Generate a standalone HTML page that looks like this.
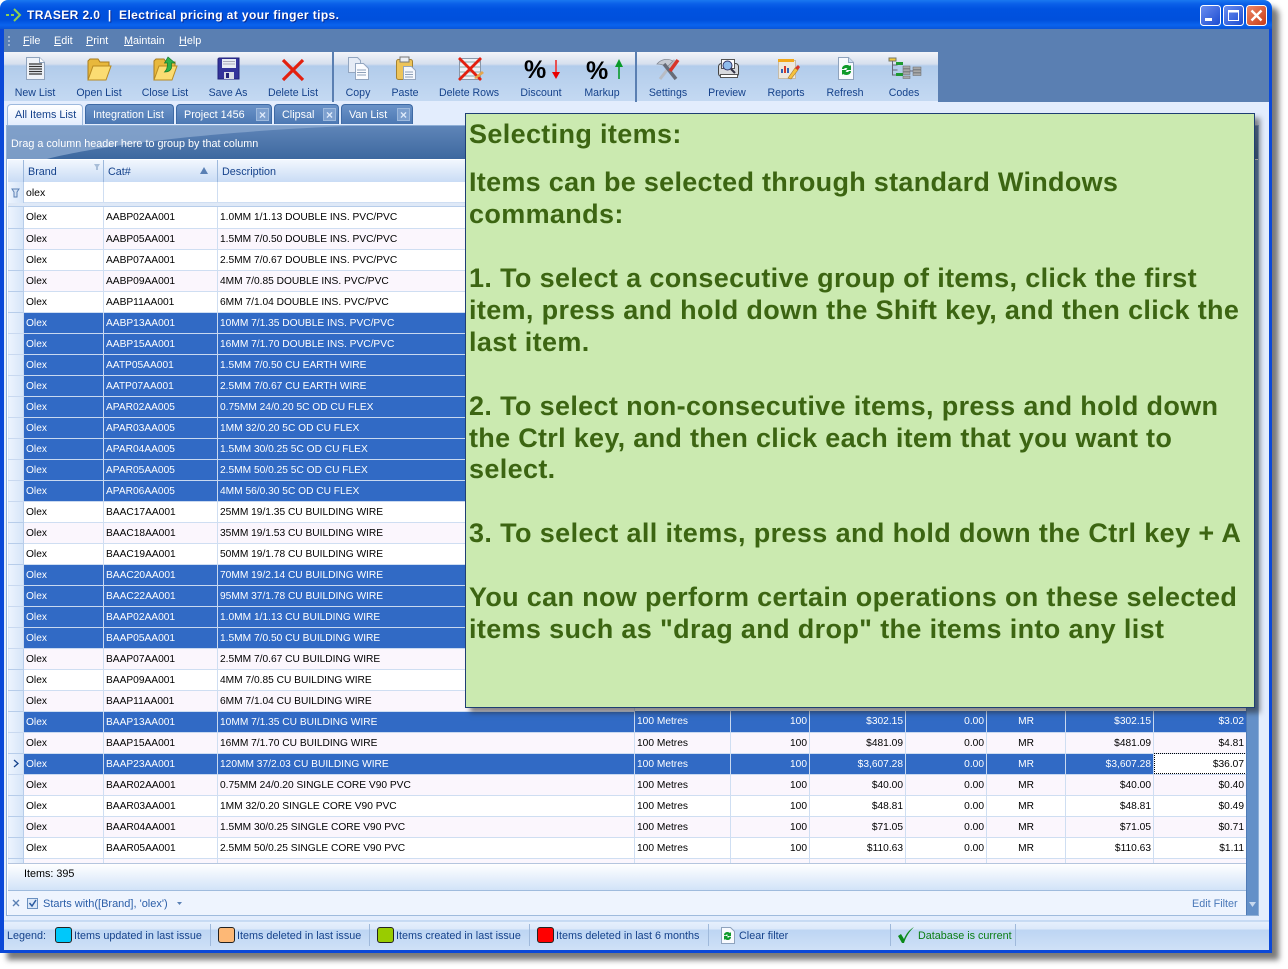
<!DOCTYPE html>
<html><head><meta charset="utf-8"><style>
*{box-sizing:border-box}
html,body{margin:0;padding:0;background:#fff;width:1288px;height:969px;overflow:hidden;font-family:"Liberation Sans",sans-serif;font-size:10.8px;color:#15428b}
.a{position:absolute;white-space:nowrap}
#win{position:absolute;left:0;top:0;width:1272px;height:953px;background:#e3edfd;border-radius:8px 8px 0 0;box-shadow:7px 7px 6px rgba(50,50,50,.65)}
#title{left:0;top:0;width:1272px;height:29px;border-radius:8px 8px 0 0;background:linear-gradient(#1a78f0 0,#0a5fe8 4px,#0052e0 9px,#0050dc 20px,#0a63ee 25px,#0a55d8 29px)}
.bl{background:#0a48d8}
.lb{transform:translateX(-50%);top:87px;line-height:13px;color:#15428b;font-size:10.6px}
.tab{top:104px;height:20px;border-radius:4px 4px 0 0;background:linear-gradient(#6b93c8,#4c78b3);border:1px solid #3e6aa5;border-bottom:0;color:#fff;line-height:20px;padding-left:7px}
.x{position:absolute;top:3px;width:13px;height:13px;background:#7da0cf;color:#dfeafa;text-align:center;line-height:12px;font-size:12px;font-weight:bold;border:1px solid #9db9dd}
#grid{left:-1px;top:0;position:absolute;border-collapse:collapse;table-layout:fixed;width:1239px}
#grid tr{height:21px}
#grid td{height:21px;padding:1px 2px 0;border:1px solid #cfdef2;border-top:0;color:#000;overflow:hidden;white-space:nowrap;background:#fff;line-height:19px;font-size:10.2px}
#grid tr:nth-child(even) td{background:#fbf6fd}
#grid td:first-child{background:linear-gradient(90deg,#edf4fe,#d6e5f8)!important;border-color:#b7cdea}
#grid tr.s td{background:#316ac5;color:#fff;border-color:#c9d9f0}
#grid td.r{text-align:right}#grid td.c{text-align:center}
#grid td.f{background:#fff!important;color:#000!important;outline:1px dotted #000;outline-offset:-1px}
.g{position:absolute;left:469px;font:bold 27px/32px "Liberation Sans",sans-serif;color:#3c6512;white-space:nowrap;letter-spacing:.35px}
.sw{position:absolute;top:927px;width:17px;height:16px;border:1px solid #222;border-radius:3px}
.sp{position:absolute;top:924px;width:1px;height:22px;background:#9fb9db}
.hd{position:absolute;top:160px;height:22px;line-height:24px;padding-left:4px;border-right:1px solid #9db9dd;background:linear-gradient(#f2f7fe,#c9dcf5);color:#15428b}
</style></head><body>
<div id="win"></div>
<div class="a" id="title"></div>
<div class="a bl" style="left:0;top:29px;width:4px;height:924px"></div>
<div class="a bl" style="left:1269px;top:29px;width:3px;height:924px"></div>
<div class="a bl" style="left:0;top:950px;width:1272px;height:3px"></div>
<svg class="a" style="left:5px;top:7px" width="18" height="16" viewBox="0 0 18 16"><path d="M1 8h3M6 8h3M9 2l6 6-6 6" fill="none" stroke="#8fd14f" stroke-width="2"/></svg>
<div class="a" style="left:27px;top:8px;color:#fff;font-weight:bold;font-size:12px;line-height:15px;letter-spacing:.4px;text-shadow:1px 1px 0 #0a2a90">TRASER 2.0 &nbsp;|&nbsp; Electrical pricing at your finger tips.</div>
<svg class="a" style="left:1200px;top:5px" width="67" height="21" viewBox="0 0 67 21">
<defs><linearGradient id="bb" x1="0" y1="0" x2="1" y2="1"><stop offset="0" stop-color="#6d8ff0"/><stop offset="1" stop-color="#1a4ad0"/></linearGradient><linearGradient id="rb" x1="0" y1="0" x2="1" y2="1"><stop offset="0" stop-color="#ee8a6a"/><stop offset="1" stop-color="#c93a15"/></linearGradient></defs>
<rect x=".5" y=".5" width="20" height="20" rx="3" fill="url(#bb)" stroke="#fff"/><rect x="5" y="13" width="7" height="3" fill="#fff"/>
<rect x="23.5" y=".5" width="20" height="20" rx="3" fill="url(#bb)" stroke="#fff"/><rect x="28.5" y="5.5" width="10" height="10" fill="none" stroke="#fff"/><rect x="28" y="5" width="11" height="2.5" fill="#fff"/>
<rect x="46.5" y=".5" width="20" height="20" rx="3" fill="url(#rb)" stroke="#fff"/><path d="M51.5 5.5l10 10M61.5 5.5l-10 10" stroke="#fff" stroke-width="2.4"/></svg>

<!-- menu -->
<div class="a" style="left:4px;top:29px;width:1265px;height:23px;background:#5a7fb2"></div>
<svg class="a" style="left:8px;top:35px" width="4" height="13"><path d="M1 1v2M1 5v2M1 9v2" stroke="#9db4d4" stroke-width="2"/></svg>
<div class="a" style="left:23px;top:35px;color:#fff;line-height:13px"><u>F</u>ile</div>
<div class="a" style="left:54px;top:35px;color:#fff;line-height:13px"><u>E</u>dit</div>
<div class="a" style="left:86px;top:35px;color:#fff;line-height:13px"><u>P</u>rint</div>
<div class="a" style="left:124px;top:35px;color:#fff;line-height:13px"><u>M</u>aintain</div>
<div class="a" style="left:179px;top:35px;color:#fff;line-height:13px"><u>H</u>elp</div>

<!-- toolbar -->
<div class="a" style="left:938px;top:52px;width:331px;height:50px;background:#5a7fb2"></div>
<div class="a" style="left:4px;top:52px;width:934px;height:49px;background:linear-gradient(#f3f5fa 0,#d6dfee 12px,#b2cceb 14px,#c4d9f2 49px)"></div>
<div class="a" style="left:332px;top:52px;width:2px;height:50px;background:#5a7fb2"></div>
<div class="a" style="left:635px;top:52px;width:2px;height:50px;background:#5a7fb2"></div>
<svg class="a" style="left:0;top:50px" width="940" height="36" viewBox="0 50 940 36">
<!-- new list -->
<path d="M26.5 57.5h13l5 5v17h-18z" fill="#eef2f8" stroke="#8fa3bd"/><path d="M39.5 57.5v5h5" fill="#fff" stroke="#8fa3bd"/><path d="M29 64h13M29 66.5h13M29 69h13M29 71.5h13M29 74h13" stroke="#333" stroke-width="1.2"/>
<!-- open -->
<path d="M88 80V61l2-2h8l2 3h9v4" fill="#e8b83c" stroke="#a97c1e"/><path d="M88 80l5-14h18l-5 14z" fill="#fbdc72" stroke="#b98a20"/>
<!-- close -->
<path d="M154 80V61l2-2h8l2 3h9v4" fill="#e8b83c" stroke="#a97c1e"/><path d="M154 80l5-14h18l-5 14z" fill="#fbdc72" stroke="#b98a20"/><path d="M168 57l7 6h-3.500v5c-1 3-4 4-7 4 2-2 3-4 3-9h-3z" fill="#2eb04a" stroke="#167a2a" stroke-width=".7"/>
<!-- save -->
<path d="M219 58h20l0 0v21h-21V59z" fill="#33339a" stroke="#22227a"/><rect x="222" y="59" width="14" height="9" fill="#e8ecf4"/><path d="M223 61.500h12M223 64h12" stroke="#aab" /><rect x="224" y="72" width="10" height="7" fill="#d8dce6"/><rect x="226" y="73" width="3" height="5" fill="#22227a"/>
<!-- delete -->
<path d="M283 60l20 20M303 60l-20 20" stroke="#e3200f" stroke-width="3.200"/>
<!-- copy -->
<path d="M348.500 57.500h9l3 3v12h-12z" fill="#e6ecf6" stroke="#93a6c0"/><path d="M355.500 63.500h8l5 5v11h-13z" fill="#fbfcff" stroke="#93a6c0"/><path d="M357 70h9M357 72.500h9M357 75h9" stroke="#8ea0b8"/>
<!-- paste -->
<rect x="396.500" y="59.500" width="16" height="20" rx="2" fill="#edc45a" stroke="#a58230"/><rect x="400" y="57" width="9" height="5" fill="#eceff4" stroke="#777"/><path d="M403.500 66.500h8l4 4v9h-12z" fill="#f5f8fd" stroke="#93a6c0"/><path d="M405 72h8M405 74.500h8M405 77h8" stroke="#8ea0b8"/>
<!-- delete rows -->
<rect x="459.500" y="58.500" width="21" height="21" fill="#eef1f6" stroke="#8a97a8"/><path d="M460 62h20M460 67h20M460 72h20M460 76h20" stroke="#8aa" /><path d="M459 58l22 22M481 58l-22 22" stroke="#e3200f" stroke-width="2.800"/><path d="M474 78l8-7 2 2-8 6z" fill="#e5a64c"/>
<!-- discount -->
<text x="524" y="78" font-family="Liberation Sans" font-weight="bold" font-size="25" fill="#000">%</text><path d="M556 60v13" stroke="#e85050" stroke-width="2"/><path d="M552 72h8l-4 7z" fill="#e80000"/>
<!-- markup -->
<text x="586" y="79" font-family="Liberation Sans" font-weight="bold" font-size="25" fill="#000">%</text><path d="M619 64v15" stroke="#0a9a2a" stroke-width="1.600"/><path d="M615 67h8l-4-8z" fill="#0a9a2a"/>
<!-- settings -->
<path d="M660 79l15-19" stroke="#b8bcc4" stroke-width="3"/><path d="M657 64c4-5 11-6 16-3l-6 6c-3-2-7-3-10-3z" fill="#c6cad2" stroke="#808690" stroke-width=".7"/><path d="M664 64l12 15" stroke="#666c78" stroke-width="3.500"/><path d="M670 71l8-11" stroke="#d8352a" stroke-width="3.500"/>
<!-- preview -->
<rect x="718.500" y="63.500" width="20" height="13" rx="3" fill="#d8dade" stroke="#444"/><rect x="721.500" y="59.500" width="13" height="9" fill="#fff" stroke="#555"/><circle cx="727.500" cy="65.500" r="4.500" fill="#8fbcec" stroke="#336"/><path d="M731 69l4 4" stroke="#334" stroke-width="2"/><rect x="720.500" y="74.500" width="17" height="3" fill="#fff" stroke="#555"/>
<!-- reports -->
<rect x="778.500" y="60.500" width="17" height="18" fill="#eee9de" stroke="#c5bba8"/><rect x="778" y="59" width="16" height="3" fill="#f2a81a"/><path d="M782 73v-4M785 73v-7M788 73v-5" stroke-width="2" stroke="#3464b4"/><path d="M785 73v-7" stroke="#d83a2a" stroke-width="2"/><path d="M788 78l7-10 3 2-7 9z" fill="#f6c23e" stroke="#a5782a" stroke-width=".6"/><path d="M795 68l3-3 2 2-2 3z" fill="#d8352a"/>
<!-- refresh -->
<path d="M838.500 57.500h10l5 5v17h-15z" fill="#f8fafe" stroke="#8fa3bd"/><path d="M848.500 57.500v5h5" fill="#cfe0f2" stroke="#8fa3bd"/><path d="M842 69c0-4 5-5 8-3l1-1v5h-5l1.500-1.500c-1.500-1-3-.5-3.500 .5zM851 71c0 4-5 5-8 3l-1 1v-5h5l-1.500 1.500c1.500 1 3 .5 3.500-.5z" fill="#0f9a2a"/>
<!-- codes -->
<rect x="889" y="58" width="7" height="3" fill="#f0c838" stroke="#776"/><path d="M892.500 61v14h5M892.500 65h5M892.500 70h5" fill="none" stroke="#667"/><rect x="896" y="62" width="7" height="3" fill="#1e9a30"/><rect x="896" y="73" width="7" height="3" fill="#1e9a30"/><rect x="903" y="66" width="7" height="2.500" fill="#a8a8a8" stroke="#666" stroke-width=".5"/><rect x="903" y="69" width="7" height="2.500" fill="#a8a8a8" stroke="#666" stroke-width=".5"/><rect x="903" y="72" width="7" height="2.500" fill="#a8a8a8" stroke="#666" stroke-width=".5"/><rect x="903" y="76" width="7" height="2.500" fill="#a8a8a8" stroke="#666" stroke-width=".5"/><rect x="913" y="67" width="8" height="2.500" fill="#a8a8a8" stroke="#666" stroke-width=".5"/><rect x="913" y="70" width="8" height="2.500" fill="#a8a8a8" stroke="#666" stroke-width=".5"/><rect x="913" y="73" width="8" height="2.500" fill="#a8a8a8" stroke="#666" stroke-width=".5"/><path d="M910 71h3" stroke="#667"/>
</svg>
<div class="a lb" style="left:35px">New List</div><div class="a lb" style="left:99px">Open List</div><div class="a lb" style="left:165px">Close List</div><div class="a lb" style="left:228px">Save As</div><div class="a lb" style="left:293px">Delete List</div><div class="a lb" style="left:358px">Copy</div><div class="a lb" style="left:405px">Paste</div><div class="a lb" style="left:469px">Delete Rows</div><div class="a lb" style="left:541px">Discount</div><div class="a lb" style="left:602px">Markup</div><div class="a lb" style="left:668px">Settings</div><div class="a lb" style="left:727px">Preview</div><div class="a lb" style="left:786px">Reports</div><div class="a lb" style="left:845px">Refresh</div><div class="a lb" style="left:904px">Codes</div>

<!-- tabs -->
<div class="a tab" style="left:7px;width:76px;background:linear-gradient(#fff,#e3edfd);color:#15428b;height:21px;border-color:#9db9dd">All Items List</div>
<div class="a tab" style="left:85px;width:89px">Integration List</div>
<div class="a tab" style="left:176px;width:96px">Project 1456<span class="x" style="left:79px">×</span></div>
<div class="a tab" style="left:274px;width:65px">Clipsal<span class="x" style="left:48px">×</span></div>
<div class="a tab" style="left:341px;width:72px">Van List<span class="x" style="left:55px">×</span></div>

<!-- grid frame -->
<div class="a" style="left:6px;top:125px;width:1253px;height:791px;background:#fff;border:1px solid #8fafd6"></div>
<svg class="a" style="left:7px;top:126px" width="1251" height="33"><defs><linearGradient id="gp" x1="0" y1="0" x2="0" y2="1"><stop offset="0" stop-color="#5f85b8"/><stop offset="1" stop-color="#3d689f"/></linearGradient></defs><rect width="1251" height="33" fill="url(#gp)"/><path d="M0 0h340C200 6 90 20 40 33H0z" fill="#86a4cc" opacity=".85"/></svg>
<div class="a" style="left:11px;top:138px;color:#fff;line-height:13px">Drag a column header here to group by that column</div>

<div class="hd" style="left:8px;width:16px;padding:0"></div>
<div class="hd" style="left:24px;width:80px">Brand</div>
<div class="hd" style="left:104px;width:114px">Cat#</div>
<div class="hd" style="left:218px;width:300px">Description</div>
<svg class="a" style="left:92px;top:162px" width="120" height="14"><path d="M2 2h6L6 5v3H4V5z" fill="#a8bdd8"/><path d="M112 5l4 7h-8z" fill="#5a80b4"/></svg>
<div class="a" style="left:8px;top:182px;width:16px;height:21px;background:linear-gradient(90deg,#edf4fe,#d6e5f8);border-right:1px solid #b7cdea"></div>
<svg class="a" style="left:11px;top:187px" width="10" height="12"><path d="M1 2h7L6 5v5H3V5z" fill="#d5e2f3" stroke="#5a80b4"/></svg>
<div class="a" style="left:24px;top:182px;width:600px;height:21px;color:#000;border-bottom:1px solid #cfdef2;line-height:22px;padding-left:2px;font-size:10.5px">olex</div>
<div class="a" style="left:103px;top:182px;width:1px;height:21px;background:#cfdef2"></div>
<div class="a" style="left:217px;top:182px;width:1px;height:21px;background:#cfdef2"></div>
<div class="a" style="left:8px;top:203px;width:1238px;height:4px;background:#dfe9f7;border-bottom:1px solid #b7cdea"></div>

<div class="a" style="left:8px;top:207px;width:1238px;height:656px;overflow:hidden">
<table id="grid">
<colgroup><col style="width:16px"><col style="width:80px"><col style="width:114px"><col style="width:417px"><col style="width:96px"><col style="width:79px"><col style="width:96px"><col style="width:81px"><col style="width:79px"><col style="width:88px"><col style="width:93px"></colgroup>
<tr><td></td><td>Olex</td><td>AABP02AA001</td><td>1.0MM 1/1.13 DOUBLE INS. PVC/PVC</td></tr>
<tr><td></td><td>Olex</td><td>AABP05AA001</td><td>1.5MM 7/0.50 DOUBLE INS. PVC/PVC</td></tr>
<tr><td></td><td>Olex</td><td>AABP07AA001</td><td>2.5MM 7/0.67 DOUBLE INS. PVC/PVC</td></tr>
<tr><td></td><td>Olex</td><td>AABP09AA001</td><td>4MM 7/0.85 DOUBLE INS. PVC/PVC</td></tr>
<tr><td></td><td>Olex</td><td>AABP11AA001</td><td>6MM 7/1.04 DOUBLE INS. PVC/PVC</td></tr>
<tr class="s"><td></td><td>Olex</td><td>AABP13AA001</td><td>10MM 7/1.35 DOUBLE INS. PVC/PVC</td></tr>
<tr class="s"><td></td><td>Olex</td><td>AABP15AA001</td><td>16MM 7/1.70 DOUBLE INS. PVC/PVC</td></tr>
<tr class="s"><td></td><td>Olex</td><td>AATP05AA001</td><td>1.5MM 7/0.50 CU EARTH WIRE</td></tr>
<tr class="s"><td></td><td>Olex</td><td>AATP07AA001</td><td>2.5MM 7/0.67 CU EARTH WIRE</td></tr>
<tr class="s"><td></td><td>Olex</td><td>APAR02AA005</td><td>0.75MM 24/0.20 5C OD CU FLEX</td></tr>
<tr class="s"><td></td><td>Olex</td><td>APAR03AA005</td><td>1MM 32/0.20 5C OD CU FLEX</td></tr>
<tr class="s"><td></td><td>Olex</td><td>APAR04AA005</td><td>1.5MM 30/0.25 5C OD CU FLEX</td></tr>
<tr class="s"><td></td><td>Olex</td><td>APAR05AA005</td><td>2.5MM 50/0.25 5C OD CU FLEX</td></tr>
<tr class="s"><td></td><td>Olex</td><td>APAR06AA005</td><td>4MM 56/0.30 5C OD CU FLEX</td></tr>
<tr><td></td><td>Olex</td><td>BAAC17AA001</td><td>25MM 19/1.35 CU BUILDING WIRE</td></tr>
<tr><td></td><td>Olex</td><td>BAAC18AA001</td><td>35MM 19/1.53 CU BUILDING WIRE</td></tr>
<tr><td></td><td>Olex</td><td>BAAC19AA001</td><td>50MM 19/1.78 CU BUILDING WIRE</td></tr>
<tr class="s"><td></td><td>Olex</td><td>BAAC20AA001</td><td>70MM 19/2.14 CU BUILDING WIRE</td></tr>
<tr class="s"><td></td><td>Olex</td><td>BAAC22AA001</td><td>95MM 37/1.78 CU BUILDING WIRE</td></tr>
<tr class="s"><td></td><td>Olex</td><td>BAAP02AA001</td><td>1.0MM 1/1.13 CU BUILDING WIRE</td></tr>
<tr class="s"><td></td><td>Olex</td><td>BAAP05AA001</td><td>1.5MM 7/0.50 CU BUILDING WIRE</td></tr>
<tr><td></td><td>Olex</td><td>BAAP07AA001</td><td>2.5MM 7/0.67 CU BUILDING WIRE</td></tr>
<tr><td></td><td>Olex</td><td>BAAP09AA001</td><td>4MM 7/0.85 CU BUILDING WIRE</td></tr>
<tr><td></td><td>Olex</td><td>BAAP11AA001</td><td>6MM 7/1.04 CU BUILDING WIRE</td></tr>
<tr class="s"><td></td><td>Olex</td><td>BAAP13AA001</td><td>10MM 7/1.35 CU BUILDING WIRE</td><td>100 Metres</td><td class="r">100</td><td class="r">$302.15</td><td class="r">0.00</td><td class="c">MR</td><td class="r">$302.15</td><td class="r">$3.02</td></tr>
<tr><td></td><td>Olex</td><td>BAAP15AA001</td><td>16MM 7/1.70 CU BUILDING WIRE</td><td>100 Metres</td><td class="r">100</td><td class="r">$481.09</td><td class="r">0.00</td><td class="c">MR</td><td class="r">$481.09</td><td class="r">$4.81</td></tr>
<tr class="s"><td></td><td>Olex</td><td>BAAP23AA001</td><td>120MM 37/2.03 CU BUILDING WIRE</td><td>100 Metres</td><td class="r">100</td><td class="r">$3,607.28</td><td class="r">0.00</td><td class="c">MR</td><td class="r">$3,607.28</td><td class="r f">$36.07</td></tr>
<tr><td></td><td>Olex</td><td>BAAR02AA001</td><td>0.75MM 24/0.20 SINGLE CORE V90 PVC</td><td>100 Metres</td><td class="r">100</td><td class="r">$40.00</td><td class="r">0.00</td><td class="c">MR</td><td class="r">$40.00</td><td class="r">$0.40</td></tr>
<tr><td></td><td>Olex</td><td>BAAR03AA001</td><td>1MM 32/0.20 SINGLE CORE V90 PVC</td><td>100 Metres</td><td class="r">100</td><td class="r">$48.81</td><td class="r">0.00</td><td class="c">MR</td><td class="r">$48.81</td><td class="r">$0.49</td></tr>
<tr><td></td><td>Olex</td><td>BAAR04AA001</td><td>1.5MM 30/0.25 SINGLE CORE V90 PVC</td><td>100 Metres</td><td class="r">100</td><td class="r">$71.05</td><td class="r">0.00</td><td class="c">MR</td><td class="r">$71.05</td><td class="r">$0.71</td></tr>
<tr><td></td><td>Olex</td><td>BAAR05AA001</td><td>2.5MM 50/0.25 SINGLE CORE V90 PVC</td><td>100 Metres</td><td class="r">100</td><td class="r">$110.63</td><td class="r">0.00</td><td class="c">MR</td><td class="r">$110.63</td><td class="r">$1.11</td></tr>
<tr><td></td><td></td><td></td><td></td><td></td><td></td><td></td><td></td><td></td><td></td><td></td></tr>
</table>
</div>
<svg class="a" style="left:12px;top:759px" width="8" height="9"><path d="M2 1l4 3.500-4 3.500" fill="none" stroke="#15428b" stroke-width="1.300"/></svg>

<!-- scrollbar -->
<div class="a" style="left:1246px;top:160px;width:12px;height:755px;background:#6490c8;border-left:1px solid #4f7ab5"></div>
<svg class="a" style="left:1248px;top:900px" width="9" height="8"><path d="M1 2h7L4.500 7z" fill="#c8d9ef"/></svg>

<!-- footer -->
<div class="a" style="left:8px;top:863px;width:1238px;height:28px;background:linear-gradient(#fff,#d2e3f8);border-top:1px solid #b5c5de;border-bottom:1px solid #9fbbdd"></div>
<div class="a" style="left:24px;top:868px;color:#000;line-height:13px">Items: 395</div>
<div class="a" style="left:8px;top:891px;width:1238px;height:25px;background:#eef4fe;border-bottom:1px solid #9fbbdd"></div>
<svg class="a" style="left:12px;top:898px" width="12" height="14"><path d="M1 2l6 6M7 2l-6 6" stroke="#5a80b4" stroke-width="1.400"/></svg>
<svg class="a" style="left:27px;top:898px" width="12" height="12"><rect x=".5" y=".5" width="10" height="10" fill="#dce8f8" stroke="#6a90c0"/><path d="M2.500 5l2.500 3 4-6" fill="none" stroke="#2a5aa0" stroke-width="1.500"/></svg>
<div class="a" style="left:43px;top:898px;line-height:13px;color:#2b5ea8;font-size:11px">Starts with([Brand], 'olex')</div>
<svg class="a" style="left:176px;top:901px" width="8" height="5"><path d="M1 1h5L3.500 4z" fill="#5a80b4"/></svg>
<div class="a" style="left:1192px;top:898px;line-height:13px;color:#4a78b8">Edit Filter</div>

<!-- legend -->
<div class="a" style="left:4px;top:916px;width:1265px;height:34px;background:linear-gradient(#e3edfd 0,#e3edfd 4px,#a9c6ea 5px,#e6f0fd 6px,#dce9fa 13px,#bdd5f3 14px,#cfe1f7 34px)"></div>
<div class="a" style="left:7px;top:930px;line-height:13px">Legend:</div>
<div class="sw" style="left:55px;background:#00c8fa"></div><div class="a" style="left:74px;top:930px;line-height:13px">Items updated in last issue</div><div class="sp" style="left:210px"></div>
<div class="sw" style="left:218px;background:#fdb876"></div><div class="a" style="left:237px;top:930px;line-height:13px">Items deleted in last issue</div><div class="sp" style="left:369px"></div>
<div class="sw" style="left:377px;background:#99cc00"></div><div class="a" style="left:396px;top:930px;line-height:13px">Items created in last issue</div><div class="sp" style="left:529px"></div>
<div class="sw" style="left:537px;background:#ff0000"></div><div class="a" style="left:556px;top:930px;line-height:13px">Items deleted in last 6 months</div><div class="sp" style="left:708px"></div>
<svg class="a" style="left:720px;top:925px" width="16" height="20" viewBox="0 0 16 20"><path d="M1.500 2.500h9l4 4v12h-13z" fill="#f8fafe" stroke="#8fa3bd"/><path d="M4 10c0-3 4-4 6-2l1-1v4H7l1-1c-1-1-2-.5-2.500 .5zM11 12c0 3-4 4-6 2l-1 1v-4h4l-1 1c1 1 2 .5 2.500-.5z" fill="#0f9a2a"/></svg>
<div class="a" style="left:739px;top:930px;line-height:13px">Clear filter</div><div class="sp" style="left:890px"></div>
<svg class="a" style="left:897px;top:926px" width="18" height="18" viewBox="0 0 18 18"><path d="M1 10l3-2 3 5C9 8 12 4 17 1 12 6 9 11 7 17h-2z" fill="#0a8a1a"/></svg>
<div class="a" style="left:918px;top:930px;line-height:13px;color:#0a7d14">Database is current</div><div class="sp" style="left:1015px"></div>

<!-- overlay -->
<div class="a" style="left:465px;top:113px;width:790px;height:595px;background:#cbeab0;border:1px solid #1e3f73;box-shadow:5px 5px 5px rgba(40,40,40,.55)"></div>
<div class="g" style="top:118px">Selecting items:</div>
<div class="g" style="top:166px;letter-spacing:.29px">Items can be selected through standard Windows</div>
<div class="g" style="top:198px">commands:</div>
<div class="g" style="top:262px">1. To select a consecutive group of items, click the first</div>
<div class="g" style="top:294px">item, press and hold down the Shift key, and then click the</div>
<div class="g" style="top:326px">last item.</div>
<div class="g" style="top:390px">2. To select non-consecutive items, press and hold down</div>
<div class="g" style="top:422px;letter-spacing:.3px">the Ctrl key, and then click each item that you want to</div>
<div class="g" style="top:453px">select.</div>
<div class="g" style="top:517px;letter-spacing:.38px">3. To select all items, press and hold down the Ctrl key + A</div>
<div class="g" style="top:581px;letter-spacing:.33px">You can now perform certain operations on these selected</div>
<div class="g" style="top:613px">items such as "drag and drop" the items into any list</div>
</body></html>
